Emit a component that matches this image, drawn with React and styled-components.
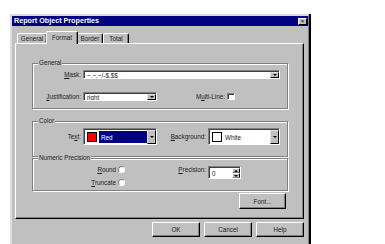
import React from "react";
import styled, { createGlobalStyle } from "styled-components";

const GlobalStyle = createGlobalStyle`
  html, body { margin: 0; padding: 0; background: #fff; }
  body {
    font-family: "Liberation Sans", Arial, sans-serif;
    font-size: 6.3px;
    color: #1a1a1a;
  }
`;

const Dialog = styled.div`
  margin: 14px 0 0 10px;
  width: 296px;
  height: 232px;
  background: #c0c0c0;
  border-top: 2px solid #dcdcdc;
  border-left: 2px solid #dcdcdc;
  border-right: 1px solid #808080;
  box-shadow: 2px 0 0 #000;
  display: flex;
  flex-direction: column;
`;

const TitleBar = styled.div`
  height: 10px;
  background: #000080;
  display: flex;
  align-items: center;
  justify-content: space-between;
  padding: 0 1px 0 2px;
`;

const Title = styled.span`
  color: #fff;
  font-weight: bold;
  font-size: 7.2px;
  line-height: 10px;
`;

const CloseBtn = styled.div`
  width: 9px;
  height: 7px;
  box-sizing: border-box;
  background: #c0c0c0;
  border-top: 1px solid #fff;
  border-left: 1px solid #fff;
  border-right: 1px solid #000;
  border-bottom: 1px solid #000;
  font-size: 6px;
  line-height: 5px;
  text-align: center;
  color: #000;
`;

const TabRow = styled.div`
  display: flex;
  align-items: flex-end;
  height: 12px;
  margin-top: 5px;
  padding-left: 5px;
`;

const Tab = styled.div`
  position: relative;
  box-sizing: border-box;
  width: ${({ $w }) => $w}px;
  height: ${({ $active }) => ($active ? 13 : 10)}px;
  margin: ${({ $active }) => ($active ? "0 -1px -1px -1px" : "0")};
  z-index: ${({ $active }) => ($active ? 1 : 0)};
  background: #c0c0c0;
  border-top: 1px solid #fff;
  border-left: 1px solid #fff;
  border-right: 1px solid #000;
  border-radius: 2px 2px 0 0;
  box-shadow: inset -1px 0 0 #808080;
  display: flex;
  align-items: ${({ $active }) => ($active ? "flex-start" : "center")};
  padding-top: ${({ $active }) => ($active ? 2 : 0)}px;
  justify-content: center;
  line-height: 7px;
`;

const Panel = styled.div`
  margin-left: 3px;
  width: 289px;
  height: 176px;
  box-sizing: border-box;
  border-top: 1px solid #fff;
  border-left: 1px solid #fff;
  border-right: 1px solid #000;
  border-bottom: 1px solid #000;
  box-shadow: inset -1px -1px 0 #808080;
  padding: 19px 15px 0 16px;
  display: flex;
  flex-direction: column;
`;

const Group = styled.div`
  position: relative;
  box-sizing: border-box;
  height: ${({ $h }) => $h}px;
  margin-top: ${({ $mt }) => $mt || 0}px;
  border: 1px solid #808080;
  box-shadow: 1px 1px 0 #fff, inset 1px 1px 0 #fff;
  padding: ${({ $pt }) => $pt}px 6px 0 0;
  display: flex;
  flex-direction: column;
`;

const Legend = styled.span`
  position: absolute;
  top: -5px;
  left: 5px;
  padding: 0 1px;
  background: #c0c0c0;
  line-height: 8px;
`;

const Row = styled.div`
  display: flex;
  align-items: center;
  height: ${({ $h }) => $h}px;
  margin-top: ${({ $mt }) => $mt || 0}px;
`;

const Label = styled.span`
  width: ${({ $w }) => $w}px;
  flex: ${({ $w }) => ($w ? "none" : "1")};
  text-align: right;
  padding-right: 2px;
  box-sizing: border-box;
  white-space: nowrap;
`;

const Sunken = styled.div`
  box-sizing: border-box;
  width: ${({ $w }) => $w}px;
  height: ${({ $h }) => $h}px;
  background: #fff;
  border-top: 1px solid #808080;
  border-left: 1px solid #808080;
  border-right: 1px solid #fff;
  border-bottom: 1px solid #fff;
  box-shadow: inset 1px 1px 0 #404040;
  display: flex;
  align-items: stretch;
  padding: 1px 0 0 1px;
`;

const FieldText = styled.span`
  flex: 1;
  padding-left: 2px;
  display: flex;
  align-items: center;
  white-space: nowrap;
  overflow: hidden;
  color: ${({ $sel }) => ($sel ? "#fff" : "inherit")};
  background: ${({ $sel }) => ($sel ? "#000080" : "transparent")};
  margin: ${({ $sel }) => ($sel ? "1px 0 1px 1px" : "0")};
`;

const DropBtn = styled.div`
  width: 9px;
  box-sizing: border-box;
  background: #c0c0c0;
  border-top: 1px solid #dfdfdf;
  border-left: 1px solid #dfdfdf;
  border-right: 1px solid #000;
  border-bottom: 1px solid #000;
  display: flex;
  align-items: center;
  justify-content: center;
  &::after {
    content: "";
    border-left: 2px solid transparent;
    border-right: 2px solid transparent;
    border-top: 2px solid #000;
  }
`;

const Swatch = styled.div`
  width: 10px;
  margin: 2px 1px 2px 2px;
  box-sizing: border-box;
  border: 1px solid #000;
  background: ${({ $c }) => $c};
`;

const Check = styled.div`
  width: 8px;
  height: 7px;
  box-sizing: border-box;
  background: #fff;
  border-top: 1px solid #808080;
  border-left: 1px solid #808080;
  border-right: 1px solid #fff;
  border-bottom: 1px solid #fff;
  box-shadow: inset 1px 1px 0 #404040;
  margin-right: 46px;
`;

const Radio = styled.div`
  width: 7px;
  height: 7px;
  box-sizing: border-box;
  border-radius: 50%;
  background: #fff;
  border-top: 1px solid #808080;
  border-left: 1px solid #808080;
  border-right: 1px solid #fff;
  border-bottom: 1px solid #fff;
`;

const RadioCol = styled.div`
  display: flex;
  flex-direction: column;
  gap: 6px;
`;

const RadioRow = styled.div`
  display: flex;
  align-items: center;
  height: 7px;
`;

const Spin = styled.div`
  width: 8px;
  display: flex;
  flex-direction: column;
  background: #c0c0c0;
`;

const SpinHalf = styled.div`
  flex: 1;
  box-sizing: border-box;
  border-top: 1px solid #fff;
  border-left: 1px solid #fff;
  border-right: 1px solid #000;
  border-bottom: 1px solid #808080;
  display: flex;
  align-items: center;
  justify-content: center;
  &::after {
    content: "";
    border-left: 2px solid transparent;
    border-right: 2px solid transparent;
    ${({ $up }) => ($up ? "border-bottom: 2px solid #000;" : "border-top: 2px solid #000;")}
  }
`;

const Button = styled.div`
  box-sizing: border-box;
  width: ${({ $w }) => $w}px;
  height: ${({ $h }) => $h}px;
  background: #c0c0c0;
  border-top: 1px solid #fff;
  border-left: 1px solid #fff;
  border-right: 1px solid #000;
  border-bottom: 1px solid #000;
  box-shadow: inset -1px -1px 0 #808080;
  display: flex;
  align-items: center;
  justify-content: center;
`;

const FontRow = styled.div`
  display: flex;
  justify-content: flex-end;
  margin-top: 2px;
  padding-right: 2px;
`;

const ButtonRow = styled.div`
  display: flex;
  justify-content: flex-end;
  gap: 4px;
  margin-top: 3px;
  padding-right: 4px;
`;

const U = styled.span`
  text-decoration: underline;
`;

export default function App() {
  return (
    <>
      <GlobalStyle />
      <Dialog>
        <TitleBar>
          <Title>Report Object Properties</Title>
          <CloseBtn>×</CloseBtn>
        </TitleBar>
        <TabRow>
          <Tab $w={30}>General</Tab>
          <Tab $w={32} $active>Format</Tab>
          <Tab $w={26}>Border</Tab>
          <Tab $w={26}>Total</Tab>
        </TabRow>
        <Panel>
          <Group $h={46} $pt={6}>
            <Legend>General</Legend>
            <Row $h={9}>
              <Label $w={50}><U>M</U>ask:</Label>
              <Sunken $w={197} $h={9}>
                <FieldText>~,~,~/-$.$$</FieldText>
                <DropBtn />
              </Sunken>
            </Row>
            <Row $h={9} $mt={13}>
              <Label $w={50}><U>J</U>ustification:</Label>
              <Sunken $w={74} $h={9}>
                <FieldText>right</FieldText>
                <DropBtn />
              </Sunken>
              <Label>M<U>u</U>lti-Line:</Label>
              <Check />
            </Row>
          </Group>

          <Group $h={36} $mt={12} $pt={6}>
            <Legend>Color</Legend>
            <Row $h={17}>
              <Label $w={50}>Te<U>x</U>t:</Label>
              <Sunken $w={74} $h={17}>
                <Swatch $c="#ff0000" />
                <FieldText $sel>Red</FieldText>
                <DropBtn />
              </Sunken>
              <Label $w={51}><U>B</U>ackground:</Label>
              <Sunken $w={72} $h={17}>
                <Swatch $c="#ffffff" />
                <FieldText>White</FieldText>
                <DropBtn />
              </Sunken>
            </Row>
          </Group>

          <Group $h={33} $mt={1} $pt={7}>
            <Legend>Numeric Precision</Legend>
            <Row $h={20} style={{ alignItems: "flex-start" }}>
              <RadioCol>
                <RadioRow>
                  <Label $w={85}><U>R</U>ound</Label>
                  <Radio />
                </RadioRow>
                <RadioRow>
                  <Label $w={85}><U>T</U>runcate</Label>
                  <Radio />
                </RadioRow>
              </RadioCol>
              <Label $w={83}><U>P</U>recision:</Label>
              <Sunken $w={33} $h={13}>
                <FieldText>0</FieldText>
                <Spin>
                  <SpinHalf $up />
                  <SpinHalf />
                </Spin>
              </Sunken>
            </Row>
          </Group>

          <FontRow>
            <Button $w={47} $h={16}>Font...</Button>
          </FontRow>
        </Panel>
        <ButtonRow>
          <Button $w={48} $h={15}>OK</Button>
          <Button $w={48} $h={15}>Cancel</Button>
          <Button $w={48} $h={15}>Help</Button>
        </ButtonRow>
      </Dialog>
    </>
  );
}
